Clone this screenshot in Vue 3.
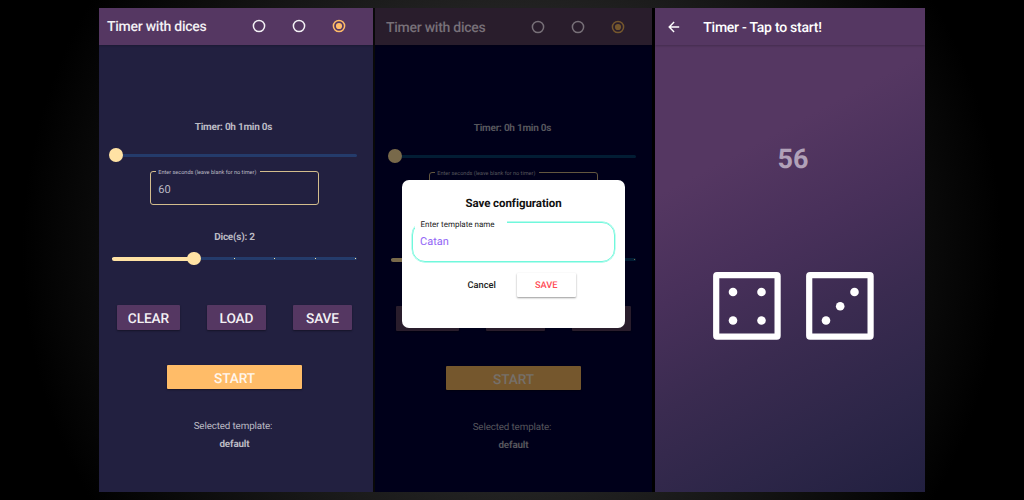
<script setup>
const screens = [
  { id: 'setup', dim: false },
  { id: 'saving', dim: true },
]
const ticks = [1, 2, 3, 4, 5, 6, 7]
const dice = [
  { id: 'left', pips: [[20, 20], [48.5, 20], [20, 48.5], [48.5, 48.5]] },
  { id: 'right', pips: [[48.5, 20], [34.2, 34.2], [20, 48.5]] },
]
</script>

<template>
  <main class="stage">
    <section v-for="s in screens" :key="s.id" class="screen" :class="[s.id, { dim: s.dim }]">
      <header class="bar">
        <h1 class="title">Timer with dices</h1>
        <div class="radios">
          <svg v-for="n in 3" :key="n" class="radio" :class="{ on: n === 3 }" viewBox="0 0 14 14">
            <circle cx="7" cy="7" r="5.6" />
            <circle v-if="n === 3" class="dot" cx="7" cy="7" r="3.1" />
          </svg>
        </div>
      </header>
      <div class="form">
        <p class="label timer-label"><span>Timer: 0h 1min 0s</span></p>
        <div class="slider seconds"><span class="thumb"></span></div>
        <div class="field">
          <span class="legend">Enter seconds (leave blank for no timer)</span>
          <span class="value">60</span>
        </div>
        <p class="label dice-label"><span>Dice(s): 2</span></p>
        <div class="slider count">
          <i v-for="t in ticks" :key="t" class="tick"></i>
          <span class="fill"></span>
          <span class="thumb"></span>
        </div>
        <div class="actions">
          <button class="btn clear">CLEAR</button>
          <button class="btn load">LOAD</button>
          <button class="btn save">SAVE</button>
        </div>
        <button class="btn start">START</button>
        <p class="selected">Selected template:</p>
        <p class="selected name">default</p>
      </div>
      <div v-if="s.dim" class="dialog">
        <h2 class="dialog-title">Save configuration</h2>
        <div class="template-field">
          <span class="template-label">Enter template name</span>
          <span class="template-value">Catan</span>
        </div>
        <div class="dialog-actions">
          <button class="cancel">Cancel</button>
          <button class="confirm">SAVE</button>
        </div>
      </div>
    </section>

    <section class="screen running">
      <header class="bar">
        <svg class="back" viewBox="0 0 12 12">
          <path d="M11.2 6H1.4M6.1 1.1L1.2 6l4.9 4.9" />
        </svg>
        <h1 class="title">Timer - Tap to start!</h1>
      </header>
      <div class="remaining">56</div>
      <div class="dice">
        <svg v-for="d in dice" :key="d.id" class="die" viewBox="0 0 68 68">
          <rect x="3.2" y="3.2" width="61.4" height="61.4" rx="0.8" />
          <circle v-for="(p, i) in d.pips" :key="i" :cx="p[0]" :cy="p[1]" r="4.3" />
        </svg>
      </div>
    </section>
  </main>
</template>

<style>
body {
  margin: 0;
  background: #000;
}
</style>

<style scoped>
* {
  box-sizing: border-box;
}
.stage {
  width: 1024px;
  height: 500px;
  padding: 8px 99px;
  display: flex;
  overflow: hidden;
  font-family: Roboto, "Liberation Sans", sans-serif;
  text-rendering: geometricPrecision;
  background: radial-gradient(circle 490px at 512px 250px, #424242, #000);
}
h1, h2, p {
  margin: 0;
}
button {
  border: 0;
  padding: 0;
  font-family: inherit;
  text-rendering: inherit;
}
.screen {
  --bar: #553762;
  --body: #222040;
  --text: #bcbbc4;
  --white: #f3f0f4;
  --cream: #ffe2a4;
  --line: #d3bd8d;
  --track: #243b6b;
  --accent: #ffbc68;
  --start-text: #fff6ec;
  position: relative;
  flex: none;
  height: 484px;
  overflow: hidden;
  background: var(--body);
}
.setup {
  width: 274px;
  box-shadow: 2px 0 #090909;
}
.saving {
  width: 277px;
  margin-left: 2px;
  padding-left: 3px;
}
.dim {
  --bar: #291d2c;
  --body: #00001a;
  --text: #56565d;
  --white: #777078;
  --cream: #78694a;
  --line: #63573f;
  --track: #021d34;
  --accent: #75572d;
  --start-text: #76706a;
}
.bar {
  display: flex;
  align-items: center;
  height: 36.5px;
  background: var(--bar);
  box-shadow: 0 1px 2px #0003;
}
.dim .bar {
  height: 37px;
  margin-left: -3px;
  padding-left: 3px;
}
.title {
  width: 144px;
  padding: 2px 0 0 8px;
  font-size: 14px;
  line-height: 18px;
  font-weight: 500;
  letter-spacing: -0.25px;
  color: var(--white);
  white-space: nowrap;
}
.radios {
  display: flex;
  gap: 26px;
  margin-left: 8.5px;
}
.radio {
  width: 14px;
  height: 14px;
  fill: none;
  stroke: var(--white);
  stroke-width: 1.5;
}
.radio.on {
  stroke: var(--accent);
}
.dot {
  fill: var(--accent);
  stroke: none;
}
.form {
  display: flex;
  flex-direction: column;
  align-items: center;
  width: 271px;
}
.dim .form {
  padding-top: 0.5px;
}
.label {
  font-size: 10px;
  line-height: 14px;
  font-weight: 700;
  letter-spacing: -0.25px;
  color: var(--text);
}
.timer-label {
  margin: 76px 2px 0 0;
}
.dice-label {
  margin-top: 25.5px;
}
.label span {
  position: relative;
  top: 0.5px;
}
.slider {
  position: relative;
  width: 245px;
  height: 3px;
  border-radius: 2px;
  background: var(--track);
}
.seconds {
  margin-top: 19px;
}
.count {
  display: flex;
  justify-content: space-between;
  align-items: center;
  margin-top: 12.5px;
}
.thumb {
  position: absolute;
  top: -5.4px;
  left: -2.6px;
  width: 13.8px;
  height: 13.8px;
  border-radius: 50%;
  background: var(--cream);
}
.count .thumb {
  left: 75px;
}
.fill {
  position: absolute;
  left: 0;
  top: -0.5px;
  width: 82px;
  height: 4px;
  border-radius: 2px;
  background: var(--cream);
}
.tick {
  width: 1.4px;
  height: 1.4px;
  margin-right: 0.6px;
  background: var(--cream);
}
.field {
  position: relative;
  width: 169.5px;
  height: 34.5px;
  margin-top: 14px;
  border: 1px solid var(--line);
  border-radius: 3px;
}
.legend {
  position: absolute;
  top: -4px;
  left: 5px;
  width: 104px;
  padding-left: 2.5px;
  font-size: 5.55px;
  line-height: 10px;
  color: var(--text);
  background: var(--body);
  white-space: nowrap;
}
.value {
  display: block;
  padding: 10.5px 0 0 7.5px;
  font-size: 11px;
  line-height: 16px;
  color: var(--text);
}
.actions {
  display: flex;
  justify-content: space-between;
  width: 235px;
  margin-top: 45px;
}
.btn {
  height: 24.5px;
  padding-top: 2px;
  border-radius: 1px;
  font-size: 13.7px;
  line-height: 24px;
  font-weight: 500;
  letter-spacing: -0.1px;
  color: var(--white);
  background: var(--bar);
  box-shadow: 0 1px 2px #0006;
}
.clear {
  width: 63px;
}
.load {
  width: 59px;
}
.save {
  width: 59px;
}
.start {
  width: 135px;
  margin-top: 35px;
  color: var(--start-text);
  background: var(--accent);
}
.selected {
  margin: 31px 3px 0 0;
  font-size: 9.8px;
  line-height: 14px;
  letter-spacing: -0.13px;
  color: var(--text);
}
.name {
  margin: 3.5px 0 0;
  font-weight: 700;
}
.dialog {
  position: absolute;
  left: 27px;
  top: 171.5px;
  display: flex;
  flex-direction: column;
  align-items: center;
  width: 223px;
  height: 148px;
  border-radius: 7px;
  background: #fff;
}
.dialog-title {
  margin-top: 15px;
  font-size: 11.5px;
  line-height: 16px;
  font-weight: 700;
  letter-spacing: -0.05px;
  color: #111;
}
.template-field {
  position: relative;
  width: 203px;
  height: 40px;
  margin-top: 11px;
  border: 1.5px solid #70f8dc;
  border-radius: 13px;
  box-shadow: 0 0 0 0.4px #70f8dc;
}
.template-label {
  position: absolute;
  left: 1.5px;
  top: -5px;
  width: 92px;
  padding-left: 6px;
  font-size: 8px;
  line-height: 13px;
  color: #222;
  background: #fff;
  white-space: nowrap;
}
.template-value {
  display: block;
  padding: 11px 0 0 7px;
  font-size: 11px;
  line-height: 16px;
  color: #9367f6;
}
.dialog-actions {
  display: flex;
  align-items: center;
  gap: 20.5px;
  margin: 11px 0 0 16px;
}
.cancel {
  width: 29px;
  padding-top: 2px;
  font-size: 9.3px;
  font-weight: 500;
  color: #222;
  background: none;
}
.confirm {
  width: 59px;
  height: 24.5px;
  padding-top: 2px;
  border-radius: 1px;
  font-size: 9.3px;
  font-weight: 500;
  color: #ff4c55;
  background: #fff;
  box-shadow: 0 1px 2px #0006;
}
.running {
  --white: #fff;
  width: 270px;
  margin-left: 3px;
  background: linear-gradient(152deg, #553762 0%, #553762 30%, #48305a 48%, #3a2b50 65%, #2d2648 83%, #222040 100%);
  box-shadow: -3px 0 #000;
}
.running .bar {
  height: 37px;
}
.back {
  width: 12px;
  height: 12px;
  margin-left: 12.8px;
  fill: none;
  stroke: #fff;
  stroke-width: 1.4;
}
.running .title {
  padding-left: 23.5px;
}
.remaining {
  margin: 97px 0 0 6px;
  font-size: 27px;
  line-height: 34px;
  font-weight: 700;
  text-align: center;
  color: #b1a1b8;
}
.dice {
  display: flex;
  gap: 25px;
  margin: 96px 0 0 58px;
}
.die {
  width: 68px;
  height: 68px;
  fill: #fff;
}
.die rect {
  fill: none;
  stroke: #fff;
  stroke-width: 6.2;
  stroke-linejoin: round;
}
</style>
